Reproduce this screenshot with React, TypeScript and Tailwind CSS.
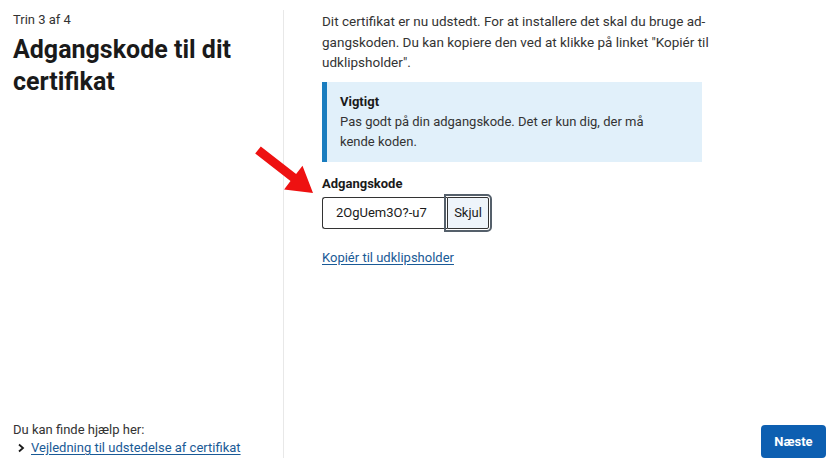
import React from "react";

export default function App() {
  return (
    <div
      className="relative flex h-[468px] w-[838px] overflow-hidden bg-white text-[#1a1a1a]"
      style={{ fontFamily: 'Roboto, "Noto Sans", sans-serif' }}
    >
      <aside className="flex w-[283px] flex-col justify-between pl-[13px] pt-[11px] pb-[11px]">
        <div>
          <div className="text-[13px] leading-[18px] text-[#333]">Trin 3 af 4</div>
          <h1 className="mt-[5px] text-[25px] font-bold leading-[32px] text-[#1a1a1a]">
            Adgangskode til dit
            <br />
            certifikat
          </h1>
        </div>
        <div className="text-[13px] leading-[18px] text-[#333]">
          <div>Du kan finde hjælp her:</div>
          <div className="flex items-center gap-[5px] pl-[4px]">
            <svg width="9" height="10" viewBox="0 0 9 10" className="text-[#1a1a1a]">
              <path d="M2 1.5 L6 5 L2 8.5" fill="none" stroke="currentColor" strokeWidth="1.8" />
            </svg>
            <a className="text-[#1a5a96] underline underline-offset-2">
              Vejledning til udstedelse af certifikat
            </a>
          </div>
        </div>
      </aside>
      <div className="my-[10px] w-px bg-[#e8e8e8]" />
      <main className="flex flex-1 flex-col justify-between pl-[38px] pt-[11px] pb-[10px] pr-[12px]">
        <div className="w-[390px]">
          <p className="whitespace-nowrap text-[13.5px] leading-[20.5px] text-[#333]">
            Dit certifikat er nu udstedt. For at installere det skal du bruge ad-
            <br />
            gangskoden. Du kan kopiere den ved at klikke på linket "Kopiér til
            <br />
            udklipsholder".
          </p>
          <div className="mt-[9px] w-[380px] border-l-[5px] border-[#1a7dbf] bg-[#e1f0fa] py-[10px] pl-[13px] text-[13px] leading-[20px] text-[#333]">
            <div className="font-bold text-[#1a1a1a]">Vigtigt</div>
            <div>
              Pas godt på din adgangskode. Det er kun dig, der må
              <br />
              kende koden.
            </div>
          </div>
          <div className="mt-[13px] text-[13px] font-bold leading-[18px] text-[#1a1a1a]">Adgangskode</div>
          <div className="mt-[4px] flex items-center">
            <div className="flex h-[32px] w-[125px] items-center rounded-l-[3px] border border-r-0 border-[#333] pl-[13px] text-[13px] text-[#1a1a1a]">
              2OgUem3O?-u7
            </div>
            <div className="flex h-[32px] w-[42px] items-center justify-center rounded-r-[2px] border border-[#333] bg-[#eef4fa] text-[13px] text-[#1a1a1a] outline-2 outline-offset-[1px] outline-[#55606b]">
              Skjul
            </div>
          </div>
          <a className="mt-[20px] block text-[13px] leading-[18px] text-[#1a5a96] underline underline-offset-2">
            Kopiér til udklipsholder
          </a>
        </div>
        <div className="flex justify-end">
          <button className="h-[33px] w-[65px] rounded-[4px] bg-[#0d5fb1] text-[13px] font-bold text-white">
            Næste
          </button>
        </div>
      </main>
      <svg className="absolute left-0 top-0" width="838" height="468" style={{ pointerEvents: "none" }}>
        <polygon
          points="260.8,146.5 296.1,174.1 302.5,165.8 313,193 284.1,189.4 290.5,181.1 255.2,153.5"
          fill="#ee1111"
        />
      </svg>
    </div>
  );
}
